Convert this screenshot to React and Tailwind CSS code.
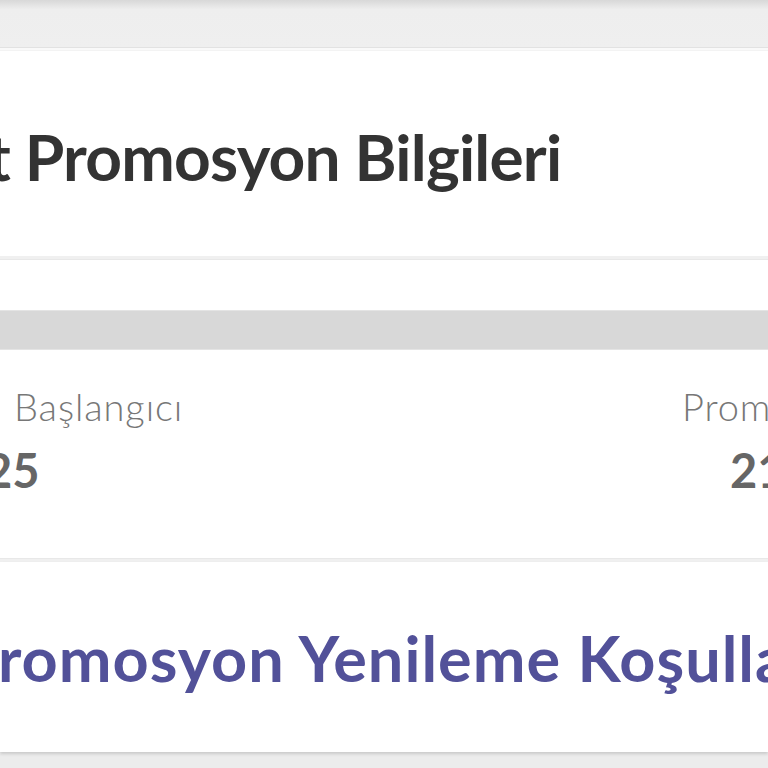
export default function App() {
  return (
    <div className="w-[768px] h-[768px] overflow-hidden bg-[#ececec] flex flex-col" style={{ fontFamily: '"Lato", "Open Sans", sans-serif' }}>
      <div className="h-[48px] shrink-0 bg-[#efefef] bg-gradient-to-b from-[#d8d8d8] via-[#eeeeee] via-[20%] to-[#efefef] border-b border-[#e2e2e2]" />
      <div className="h-[3px] shrink-0 bg-[#f9f9f9] border-b border-[#f3f3f3]" />
      <div className="h-[205px] shrink-0 bg-white flex items-center overflow-hidden">
        <h1 className="whitespace-nowrap text-[64px] font-bold text-[#333333] leading-none ml-[-13px] mt-[6px] tracking-[-0.8px]">t Promosyon Bilgileri</h1>
      </div>
      <div className="h-[4px] shrink-0 bg-[#f0f0f0] border-b border-[#e8e8e8]" />
      <div className="h-[50px] shrink-0 bg-white" />
      <div className="h-[40px] shrink-0 bg-[#d8d8d8] border-t border-[#e4e4e4] border-b border-[#dedede]" />
      <div className="h-[208px] shrink-0 bg-white flex justify-between overflow-hidden">
        <div className="flex flex-col ml-[-19px] pt-[37px]">
          <span className="whitespace-nowrap text-[38px] font-light text-[#777777] leading-none tracking-[0.9px]">n Başlangıcı</span>
          <span className="whitespace-nowrap text-[47px] font-bold text-[#666666] leading-none mt-[22px] ml-[4px]">25</span>
        </div>
        <div className="flex flex-col items-start w-[86px] pt-[37px] shrink-0">
          <span className="whitespace-nowrap text-[38px] font-light text-[#777777] leading-none tracking-[0.9px]">Promosyon</span>
          <span className="whitespace-nowrap text-[47px] font-bold text-[#666666] leading-none mt-[22px] ml-[48px]">21</span>
        </div>
      </div>
      <div className="h-[4px] shrink-0 bg-[#f0f0f0] border-t border-[#e8e8e8]" />
      <div className="h-[190px] shrink-0 bg-white flex items-center overflow-hidden shadow-[0_2px_3px_rgba(0,0,0,0.15)]">
        <span className="whitespace-nowrap text-[63px] font-bold text-[#525199] leading-none ml-[-2px] tracking-[1px]">romosyon Yenileme Koşulları</span>
      </div>
    </div>
  );
}
